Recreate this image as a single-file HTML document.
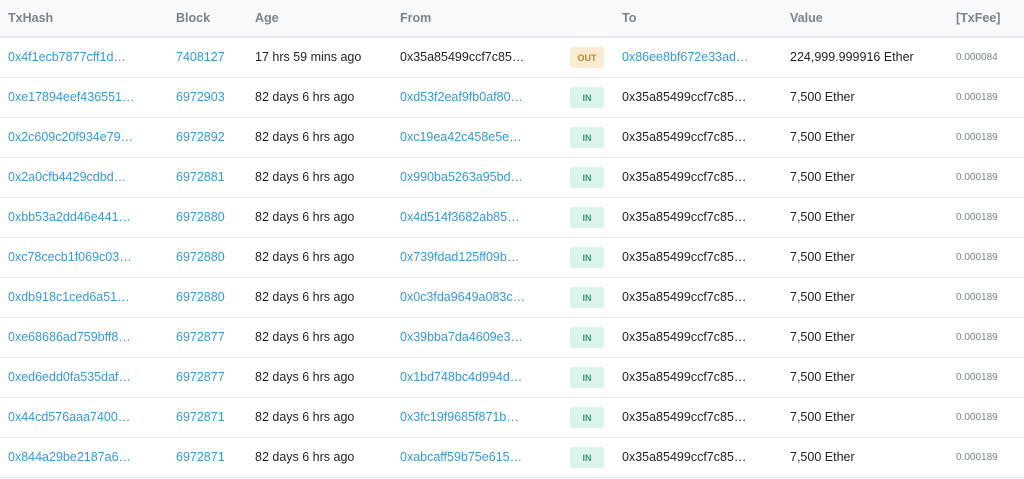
<!DOCTYPE html>
<html><head><style>
body{margin:0;width:1024px;height:479px;background:#fff;font-family:"Liberation Sans",Arial,sans-serif;font-size:12.5px;color:#1e2022;overflow:hidden;position:relative}
.hd{position:absolute;left:0;top:0;width:1024px;height:36px;background:#f8f9fa;border-bottom:2px solid #e7eaf3}
.hd span{position:absolute;top:11px;font-weight:bold;color:#77838f;font-size:12.5px}
.r{position:absolute;left:0;width:1024px;height:39px;border-bottom:1px solid #e7eaf3}
.r span{position:absolute;top:12px;white-space:nowrap}
.a{color:#3498db}
.f{font-size:10px;color:#77838f;top:14px!important}
.b{position:absolute;left:570px;top:9px;width:34px;height:21px;border-radius:3px;font-size:9px;font-weight:bold;text-align:center;line-height:22px}
.in{background:#daf4eb;color:#3a9a76}
.out{background:#f9ecd3;color:#b8872c}
</style></head><body>
<div class="hd"><span style="left:8px">TxHash</span><span style="left:176px">Block</span><span style="left:255px">Age</span><span style="left:400px">From</span><span style="left:622px">To</span><span style="left:790px">Value</span><span style="left:956px">[TxFee]</span></div>

<div class="r" style="top:38px"><span class="a" style="left:8px">0x4f1ecb7877cff1d…</span><span class="a" style="left:176px">7408127</span><span style="left:255px">17 hrs 59 mins ago</span><span style="left:400px">0x35a85499ccf7c85…</span><div class="b out">OUT</div><span class="a" style="left:622px">0x86ee8bf672e33ad…</span><span style="left:790px">224,999.999916 Ether</span><span class="f" style="left:956px">0.000084</span></div>

<div class="r" style="top:78px"><span class="a" style="left:8px">0xe17894eef436551…</span><span class="a" style="left:176px">6972903</span><span style="left:255px">82 days 6 hrs ago</span><span class="a" style="left:400px">0xd53f2eaf9fb0af80…</span><div class="b in">IN</div><span style="left:622px">0x35a85499ccf7c85…</span><span style="left:790px">7,500 Ether</span><span class="f" style="left:956px">0.000189</span></div>

<div class="r" style="top:118px"><span class="a" style="left:8px">0x2c609c20f934e79…</span><span class="a" style="left:176px">6972892</span><span style="left:255px">82 days 6 hrs ago</span><span class="a" style="left:400px">0xc19ea42c458e5e…</span><div class="b in">IN</div><span style="left:622px">0x35a85499ccf7c85…</span><span style="left:790px">7,500 Ether</span><span class="f" style="left:956px">0.000189</span></div>

<div class="r" style="top:158px"><span class="a" style="left:8px">0x2a0cfb4429cdbd…</span><span class="a" style="left:176px">6972881</span><span style="left:255px">82 days 6 hrs ago</span><span class="a" style="left:400px">0x990ba5263a95bd…</span><div class="b in">IN</div><span style="left:622px">0x35a85499ccf7c85…</span><span style="left:790px">7,500 Ether</span><span class="f" style="left:956px">0.000189</span></div>

<div class="r" style="top:198px"><span class="a" style="left:8px">0xbb53a2dd46e441…</span><span class="a" style="left:176px">6972880</span><span style="left:255px">82 days 6 hrs ago</span><span class="a" style="left:400px">0x4d514f3682ab85…</span><div class="b in">IN</div><span style="left:622px">0x35a85499ccf7c85…</span><span style="left:790px">7,500 Ether</span><span class="f" style="left:956px">0.000189</span></div>

<div class="r" style="top:238px"><span class="a" style="left:8px">0xc78cecb1f069c03…</span><span class="a" style="left:176px">6972880</span><span style="left:255px">82 days 6 hrs ago</span><span class="a" style="left:400px">0x739fdad125ff09b…</span><div class="b in">IN</div><span style="left:622px">0x35a85499ccf7c85…</span><span style="left:790px">7,500 Ether</span><span class="f" style="left:956px">0.000189</span></div>

<div class="r" style="top:278px"><span class="a" style="left:8px">0xdb918c1ced6a51…</span><span class="a" style="left:176px">6972880</span><span style="left:255px">82 days 6 hrs ago</span><span class="a" style="left:400px">0x0c3fda9649a083c…</span><div class="b in">IN</div><span style="left:622px">0x35a85499ccf7c85…</span><span style="left:790px">7,500 Ether</span><span class="f" style="left:956px">0.000189</span></div>

<div class="r" style="top:318px"><span class="a" style="left:8px">0xe68686ad759bff8…</span><span class="a" style="left:176px">6972877</span><span style="left:255px">82 days 6 hrs ago</span><span class="a" style="left:400px">0x39bba7da4609e3…</span><div class="b in">IN</div><span style="left:622px">0x35a85499ccf7c85…</span><span style="left:790px">7,500 Ether</span><span class="f" style="left:956px">0.000189</span></div>

<div class="r" style="top:358px"><span class="a" style="left:8px">0xed6edd0fa535daf…</span><span class="a" style="left:176px">6972877</span><span style="left:255px">82 days 6 hrs ago</span><span class="a" style="left:400px">0x1bd748bc4d994d…</span><div class="b in">IN</div><span style="left:622px">0x35a85499ccf7c85…</span><span style="left:790px">7,500 Ether</span><span class="f" style="left:956px">0.000189</span></div>

<div class="r" style="top:398px"><span class="a" style="left:8px">0x44cd576aaa7400…</span><span class="a" style="left:176px">6972871</span><span style="left:255px">82 days 6 hrs ago</span><span class="a" style="left:400px">0x3fc19f9685f871b…</span><div class="b in">IN</div><span style="left:622px">0x35a85499ccf7c85…</span><span style="left:790px">7,500 Ether</span><span class="f" style="left:956px">0.000189</span></div>

<div class="r" style="top:438px"><span class="a" style="left:8px">0x844a29be2187a6…</span><span class="a" style="left:176px">6972871</span><span style="left:255px">82 days 6 hrs ago</span><span class="a" style="left:400px">0xabcaff59b75e615…</span><div class="b in">IN</div><span style="left:622px">0x35a85499ccf7c85…</span><span style="left:790px">7,500 Ether</span><span class="f" style="left:956px">0.000189</span></div>
</body></html>
